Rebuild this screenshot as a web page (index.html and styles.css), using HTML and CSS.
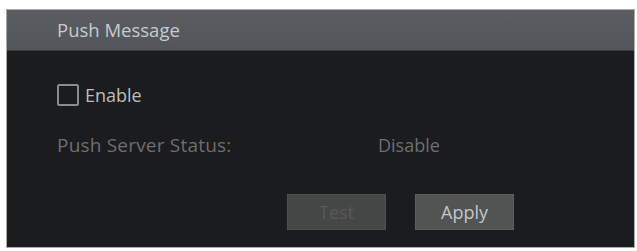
FILE: index.html
```html
<!DOCTYPE html>
<html>
<head>
<meta charset="utf-8">
<link rel="stylesheet" href="styles.css">
</head>
<body>
<div class="panel">
  <div class="header">Push Message</div>
  <div class="content">
    <label class="enable-row"><span class="checkbox"></span><span class="enable-text">Enable</span></label>
    <div class="status-row"><span class="status-label">Push Server Status:</span><span class="status-value">Disable</span></div>
    <div class="buttons">
      <button class="btn btn-disabled">Test</button>
      <button class="btn btn-apply">Apply</button>
    </div>
  </div>
</div>
</body>
</html>
```
FILE: styles.css
```css
html, body {
  margin: 0;
  padding: 0;
  background: #ffffff;
}
body {
  font-family: "Open Sans", "Noto Sans", sans-serif;
}
.panel {
  margin: 9px 0 0 6px;
  width: 627px;
  height: 237px;
  border: 1px solid #a8aaac;
  background: #1b1c1e;
  display: flex;
  flex-direction: column;
}
.header {
  height: 41px;
  box-sizing: border-box;
  background: linear-gradient(#5a5d62, #52565b);
  border-bottom: 1px solid #3a3c40;
  color: #c9cacc;
  font-size: 18.5px;
  display: flex;
  align-items: center;
  padding-left: 50px;
  padding-bottom: 2px;
}
.content {
  display: flex;
  flex-direction: column;
  padding-left: 50px;
}
.enable-row {
  margin-top: 33px;
  height: 22px;
  display: flex;
  align-items: center;
  gap: 6px;
}
.checkbox {
  width: 18px;
  height: 18px;
  border: 2px solid #8a8b8d;
  border-radius: 2px;
  box-sizing: content-box;
}
.enable-text {
  color: #bcbdbf;
  font-size: 18px;
}
.status-row {
  margin-top: 28px;
  height: 22px;
  display: flex;
  align-items: center;
  font-size: 18px;
  color: #6d6e70;
}
.status-label {
  width: 321px;
  font-size: 19px;
  letter-spacing: 0.2px;
}
.buttons {
  margin-top: 38px;
  display: flex;
  justify-content: flex-end;
  padding-right: 120px;
  gap: 29px;
}
.btn {
  width: 99px;
  height: 36px;
  border: 1px solid #5c5e5e;
  font-family: "Open Sans", "Noto Sans", sans-serif;
  font-size: 18px;
  padding: 0;
}
.btn-disabled {
  background: #454746;
  color: #575958;
  border-color: #4e504f;
}
.btn-apply {
  background: #515453;
  color: #c4c6c6;
}
```
